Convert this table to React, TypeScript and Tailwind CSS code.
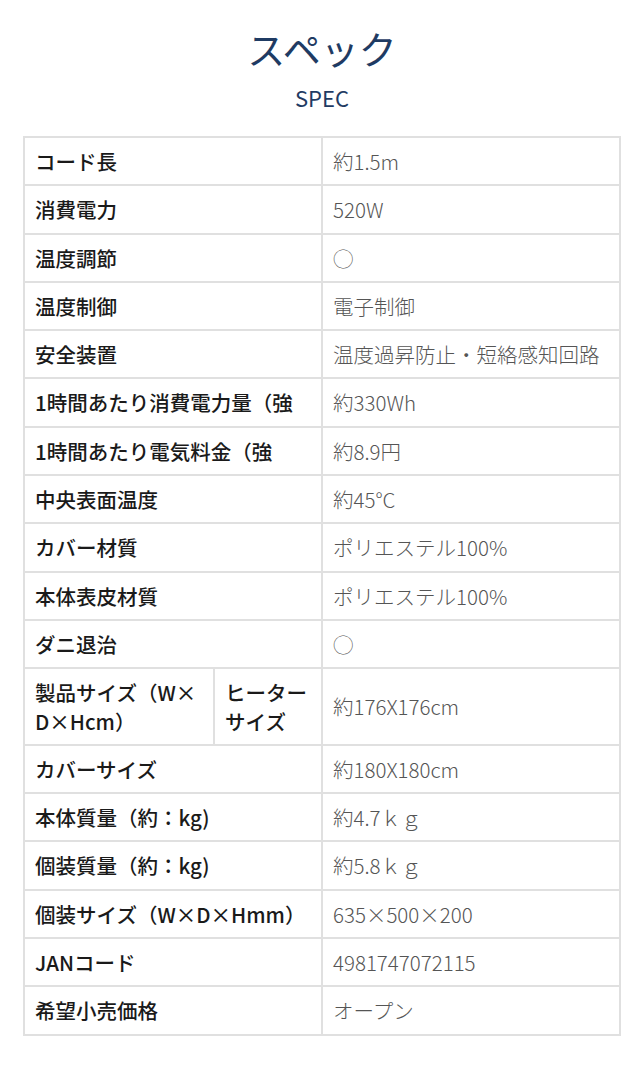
const rows: [string, string][] = [
  ["コード長", "約1.5m"],
  ["消費電力", "520W"],
  ["温度調節", "◯"],
  ["温度制御", "電子制御"],
  ["安全装置", "温度過昇防止・短絡感知回路"],
  ["1時間あたり消費電力量（強", "約330Wh"],
  ["1時間あたり電気料金（強", "約8.9円"],
  ["中央表面温度", "約45°C"],
  ["カバー材質", "ポリエステル100%"],
  ["本体表皮材質", "ポリエステル100%"],
  ["ダニ退治", "◯"],
];

const rowsAfter: [string, string][] = [
  ["カバーサイズ", "約180X180cm"],
  ["本体質量（約：kg)", "約4.7ｋｇ"],
  ["個装質量（約：kg)", "約5.8ｋｇ"],
  ["個装サイズ（W×D×Hmm）", "635×500×200"],
  ["JANコード", "4981747072115"],
  ["希望小売価格", "オープン"],
];

const th = "border-2 border-[#e0e0e0] px-[10px] py-[9px] text-left align-middle font-medium text-[#1a1a1a]";
const td = "border-2 border-[#e0e0e0] px-[10px] py-[9px] align-middle font-light text-[#555]";

export default function App() {
  return (
    <div
      className="min-h-[1080px] bg-white pt-[22px]"
      style={{ fontFamily: '"Noto Sans CJK JP", "Noto Sans", sans-serif' }}
    >
      <h1 className="text-center text-[38px] leading-[52px] font-normal text-[#1f3b63]">スペック</h1>
      <p className="mt-[8px] text-center text-[22px] leading-[30px] text-[#1f3b63]">SPEC</p>

      <table className="mx-[23px] mt-[24px] w-[598px] table-fixed border-collapse text-[20.5px] leading-[28.3px]">
        <colgroup>
          <col className="w-[190px]" />
          <col className="w-[108px]" />
          <col />
        </colgroup>
        <tbody>
          {rows.map(([k, v]) => (
            <tr key={k}>
              <th colSpan={2} className={th + " whitespace-nowrap"}>{k}</th>
              <td className={td}>{v}</td>
            </tr>
          ))}
          <tr>
            <th className={th}>
              製品サイズ（W×
              <br />
              D×Hcm）
            </th>
            <th className={th}>
              ヒーター
              <br />
              サイズ
            </th>
            <td className={td}>約176X176cm</td>
          </tr>
          {rowsAfter.map(([k, v]) => (
            <tr key={k}>
              <th colSpan={2} className={th + " whitespace-nowrap"}>{k}</th>
              <td className={td}>{v}</td>
            </tr>
          ))}
        </tbody>
      </table>
    </div>
  );
}
